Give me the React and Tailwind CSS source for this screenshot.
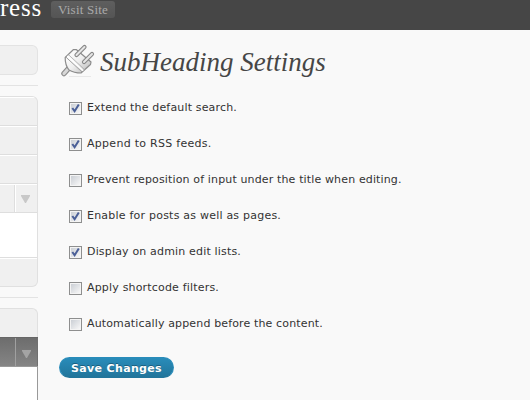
import React from "react";

const options = [
  { label: "Extend the default search.", checked: true, tracking: "tracking-[0.16px]" },
  { label: "Append to RSS feeds.", checked: true, tracking: "tracking-[0.28px]" },
  { label: "Prevent reposition of input under the title when editing.", checked: false, tracking: "tracking-[0.14px]" },
  { label: "Enable for posts as well as pages.", checked: true, tracking: "tracking-[0.22px]" },
  { label: "Display on admin edit lists.", checked: true, tracking: "tracking-[0.17px]" },
  { label: "Apply shortcode filters.", checked: false, tracking: "tracking-[0.18px]" },
  { label: "Automatically append before the content.", checked: false, tracking: "tracking-[0.14px]" },
];

function Header() {
  return (
    <header className="flex h-[30px] items-start overflow-hidden bg-[#464646] font-['Liberation_Serif',serif]">
      <div className="flex h-4 w-[51px] shrink-0 items-center justify-end whitespace-nowrap pr-[9px] text-[25px] leading-4 tracking-[0.8px] text-white">
        Press
      </div>
      <div className="mt-px flex h-[17px] w-16 items-center justify-center whitespace-nowrap rounded-[3px] bg-linear-to-b from-[#5e5e5e] to-[#555] text-[13px] leading-none tracking-[0.2px] text-[#aaa]">
        Visit Site
      </div>
    </header>
  );
}

function Arrow({ color }) {
  return (
    <svg width="9" height="8" viewBox="0 0 9 8" fill={color}>
      <path d="M0 0h9v1L5 8H4L0 1z" />
    </svg>
  );
}

function PlugIcon() {
  return (
    <svg className="shrink-0" width="36" height="34" viewBox="0 0 36 34" fill="none">
      <defs>
        <linearGradient id="plug" x1="9" y1="9" x2="26" y2="26" gradientUnits="userSpaceOnUse">
          <stop stopColor="#fdfdfd" />
          <stop offset="0.5" stopColor="#eeeeee" />
          <stop offset="1" stopColor="#c4c4c4" />
        </linearGradient>
      </defs>
      <path d="M8 32.500H30" stroke="#e8e8e8" />
      <path d="M7.500 24.500L3 29.500" stroke="#8c8c8c" strokeWidth="5.500" strokeLinecap="round" />
      <path d="M7.500 24.500L3 29.500" stroke="#d8d8d8" strokeWidth="3.200" strokeLinecap="round" />
      <path
        d="M12.500 5.500L15.500 5.700L30 18L29.500 20.500L20 29Q13 29 8 26Q4 21 4.200 13.500z"
        fill="url(#plug)"
        stroke="#8c8c8c"
        strokeWidth="1.200"
        strokeLinejoin="round"
      />
      <path d="M4.800 13L21 28" stroke="#a0a0a0" strokeWidth="1" />
      <path d="M6.200 12L22.200 26.800" stroke="#fff" strokeWidth="1.400" />
      <path d="M7.600 10.800L23.500 25.500" stroke="#b0b0b0" strokeWidth="0.900" />
      <path d="M15.500 11L23.500 3M23 18L31 10" stroke="#868686" strokeWidth="4.200" strokeLinecap="round" />
      <path d="M15.500 11L23.500 3M23 18L31 10" stroke="#e6e6e6" strokeWidth="2" strokeLinecap="round" />
    </svg>
  );
}

function Sidebar() {
  return (
    <aside className="flex w-[38px] shrink-0 flex-col">
      <div className="mt-[15px] h-[30px] rounded-r-[6px] border border-l-0 border-[#e3e3e3] bg-[#f0f0f0]" />
      <div className="mt-[10px] h-px bg-[#e3e3e3]" />
      <div className="mt-[10px] flex h-[191px] flex-col overflow-hidden rounded-r-[6px] border border-l-0 border-[#e0e0e0] bg-[#f0f0f0]">
        <div className="h-[29px] border-b border-b-[#dedede] border-t border-t-white" />
        <div className="h-[29px] border-b border-b-[#dedede] border-t border-t-white" />
        <div className="h-[29px] border-b border-b-[#dedede] border-t border-t-white" />
        <div className="flex h-[29px] border-b border-b-[#dedede] border-t border-t-white">
          <div className="w-[15px] border-r border-[#dedede]" />
          <div className="flex flex-1 items-center justify-center border-l border-white pr-[2px] pt-px">
            <Arrow color="#c8c8c8" />
          </div>
        </div>
        <div className="h-[45px] border-b border-[#dedede] bg-white" />
        <div className="flex-1 border-t border-white" />
      </div>
      <div className="mt-[10px] h-px bg-[#e3e3e3]" />
      <div className="mt-[10px] h-[29px] rounded-tr-[6px] border-r border-t border-[#e0e0e0] bg-[#f0f0f0]" />
      <div className="flex h-[30px] border-y border-b-[#999] border-t-[#666] bg-linear-to-b from-[#6d6d6d] to-[#858585]">
        <div className="w-4 border-r border-[#a0a0a0]" />
        <div className="flex flex-1 items-center justify-center border-r border-[#707070] pt-[3px]">
          <Arrow color="#a4a4a4" />
        </div>
      </div>
      <div className="flex-1 border-r border-[#999] bg-white" />
    </aside>
  );
}

function Checkbox({ checked }) {
  return (
    <span className="flex h-[13px] w-[13px] shrink-0 items-center justify-center border border-[#8e8f8f] bg-[#f4f4f4]">
      <span className="flex h-[9px] w-[9px] bg-linear-to-br from-[#cbcfd5] to-[#f7f7f7]">
        {checked && (
          <svg width="9" height="9" viewBox="0 0 9 9" fill="none">
            <path d="M1.300 4L3.600 7.200L7.800 0.500" stroke="#4a5f97" strokeWidth="2" />
          </svg>
        )}
      </span>
    </span>
  );
}

export default function App() {
  return (
    <div className="flex h-[400px] w-[530px] flex-col overflow-hidden bg-[#f9f9f9]">
      <Header />
      <div className="flex min-h-0 flex-1">
        <Sidebar />
        <main className="flex flex-1 flex-col items-start pl-[21px] font-['DejaVu_Sans',sans-serif] text-[#333]">
          <div className="mt-[14px] flex h-[35px] items-start pl-[2px]">
            <PlugIcon />
            <h1 className="ml-[3px] whitespace-nowrap font-['Liberation_Serif',serif] text-[27px] italic leading-9 text-[#464646]">
              SubHeading Settings
            </h1>
          </div>
          <div className="mt-[20px] flex flex-col gap-5 pl-[10px]">
            {options.map((o) => (
              <label key={o.label} className="flex h-4 items-end gap-[5px]">
                <Checkbox checked={o.checked} />
                <span className={"self-start whitespace-nowrap pt-px text-[11px] leading-4 " + o.tracking}>{o.label}</span>
              </label>
            ))}
          </div>
          <button className="mt-[26px] flex h-[21px] w-[115px] items-center justify-center whitespace-nowrap rounded-full border border-[#298cba] border-b-[#21759b] bg-linear-to-b from-[#298cba] to-[#21759b] pt-px text-[11px] font-bold leading-none tracking-[0.35px] text-white [text-shadow:0_-1px_0_rgba(0,0,0,0.3)]">
            Save Changes
          </button>
        </main>
      </div>
    </div>
  );
}
